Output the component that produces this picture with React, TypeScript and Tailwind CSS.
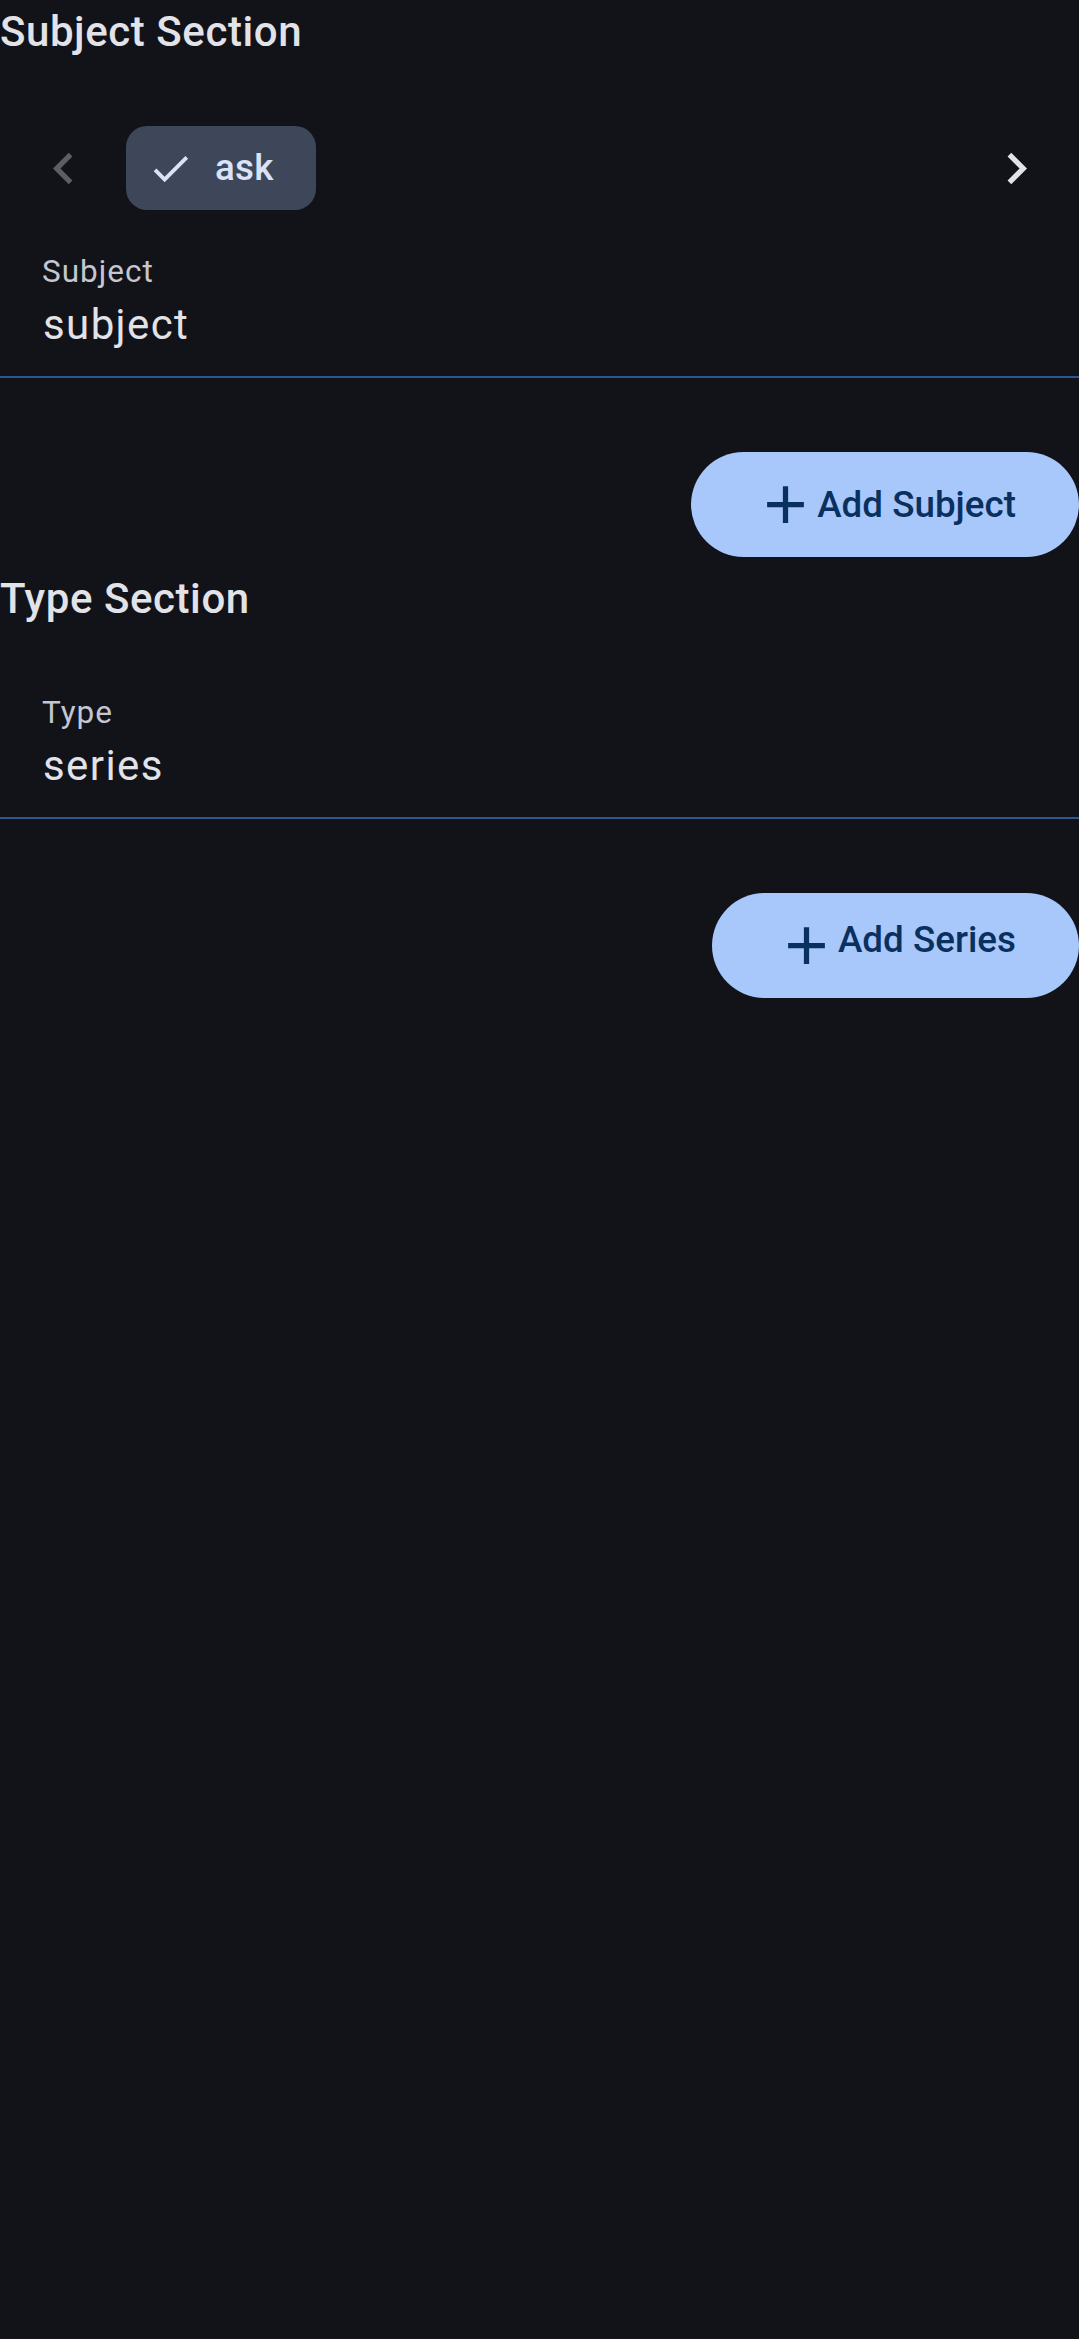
import React from 'react'

function Chevron({ dir, className }: { dir: 'left' | 'right'; className: string }) {
  return (
    <svg viewBox="0 0 24 24" className={className} fill="currentColor">
      {dir === 'left' ? (
        <path d="M15.41 7.41L14 6l-6 6 6 6 1.41-1.41L10.83 12z" />
      ) : (
        <path d="M10 6L8.59 7.41 13.17 12l-4.58 4.59L10 18l6-6z" />
      )}
    </svg>
  )
}

function PlusIcon() {
  return (
    <svg viewBox="0 0 24 24" className="h-[63px] w-[63px] shrink-0" fill="currentColor">
      <path d="M19 13h-6v6h-2v-6H5v-2h6V5h2v6h6v2z" />
    </svg>
  )
}

function TextField({ label, value }: { label: string; value: string }) {
  return (
    <div className="mt-[42px] box-border h-[147px] border-b-2 border-[#2d5791] px-[42px] pt-[20px]">
      <div className="text-[31.5px] leading-[42px] tracking-[1px] text-[#c4c6d0]">{label}</div>
      <div className="pl-[1px] text-[42px] leading-[63px] tracking-[1.4px] text-[#e2e2e9]">{value}</div>
    </div>
  )
}

function AddButton({ label, raised }: { label: string; raised?: boolean }) {
  return (
    <div className="mt-[74px] flex justify-end">
      <button className="flex h-[105px] items-center rounded-full bg-[#a8c7fa] pl-[63px] pr-[63px] text-[#0a305f]">
        <PlusIcon />
        <span className={`text-[36.75px] font-medium tracking-[0.02px] ${raised ? 'pb-[12px]' : ''}`}>{label}</span>
      </button>
    </div>
  )
}

function SectionTitle({ children, className = '' }: { children: React.ReactNode; className?: string }) {
  return <h2 className={`text-[42px] font-medium leading-[63px] tracking-[0.57px] text-[#e2e2e9] ${className}`}>{children}</h2>
}

export default function App() {
  return (
    <main className="min-h-[2339px] bg-[#121318] font-['Roboto',sans-serif]">
      {/* Subject */}
      <SectionTitle>Subject Section</SectionTitle>
      <div className="mt-[42px] flex h-[126px] items-center">
        <button className="flex h-[126px] w-[126px] items-center justify-center text-[#5d5e64]">
          <Chevron dir="left" className="h-[63px] w-[63px]" />
        </button>
        <div className="flex h-[84px] items-center rounded-[21px] bg-[#3e4759] pl-[21px] pr-[42px] text-[#dae2f9]">
          <svg viewBox="0 0 24 24" className="h-[47px] w-[47px]" fill="currentColor">
            <path d="M9 16.17L4.83 12l-1.42 1.41L9 19 21 7l-1.41-1.41z" />
          </svg>
          <span className="ml-[21px] text-[36.75px] font-medium tracking-[0.26px]">ask</span>
        </div>
        <div className="flex-1" />
        <button className="flex h-[126px] w-[126px] items-center justify-center text-[#e2e2e9]">
          <Chevron dir="right" className="h-[63px] w-[63px]" />
        </button>
      </div>
      <div className="-mt-[42px]">
        <TextField label="Subject" value="subject" />
      </div>
      <AddButton label="Add Subject" />

      {/* Type */}
      <SectionTitle className="mt-[10px]">Type Section</SectionTitle>
      <TextField label="Type" value="series" />
      <AddButton label="Add Series" raised />
    </main>
  )
}
